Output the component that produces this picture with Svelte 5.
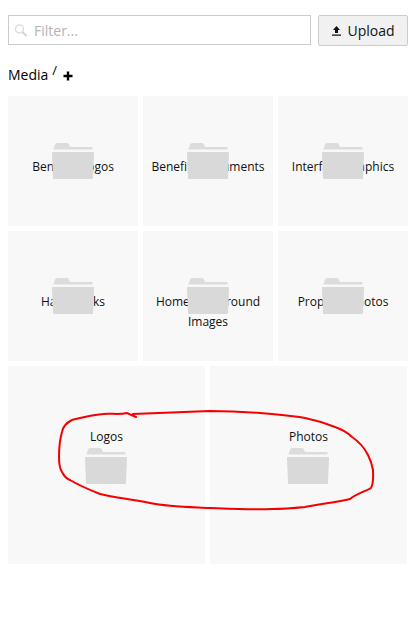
<script>
  const folders = [
    'Benefits Logos',
    'Benefits Documents',
    'Interface Graphics',
    'Handbooks',
    'Home Background Images',
    'Property Photos'
  ];
  const bigFolders = ['Logos', 'Photos'];
</script>

{#snippet folderIcon()}
  <svg class="folder" width="42" height="36" viewBox="0 0 42 36">
    <path d="M2 5 L3 1.5 Q3.5 0 5 0 H15 Q16.5 0 17 1.5 L18 4 H40.5 V6.5 H1.5 V5 Z" fill="#dcdcdc" />
    <path d="M0.5 9 H41.5 Q42 9 42 10 L41 35 Q41 36 40 36 H2 Q1 36 1 35 L0 10 Q0 9 0.5 9 Z" fill="#d9d9d9" />
  </svg>
{/snippet}

<div class="page">
  <div class="toolbar">
    <div class="filter">
      <svg class="search" width="14" height="14" viewBox="0 0 14 14">
        <circle cx="5.5" cy="6" r="4" fill="none" stroke="#dedede" stroke-width="1.5" />
        <path d="M8.5 9 L12.5 13" stroke="#d4d4d4" stroke-width="2" />
      </svg>
      <span class="placeholder">Filter...</span>
    </div>
    <button class="upload">
      <svg width="9" height="10" viewBox="0 0 9 10">
        <path d="M4.5 0 L8 4 H6 V7 H3 V4 H1 Z M0 8.4 H9 V9.8 H0 Z" fill="#111" />
      </svg>
      Upload
    </button>
  </div>

  <div class="crumbs">
    <span>Media</span>
    <span class="slash">/</span>
    <svg class="plus" width="10" height="10" viewBox="0 0 10 10">
      <path d="M5 0.5 V9.5 M0.5 5 H9.5" stroke="#000" stroke-width="2.4" />
    </svg>
  </div>

  <div class="grid">
    {#each folders as name}
      <div class="tile">
        <span class="name">{name}</span>
        {@render folderIcon()}
      </div>
    {/each}
  </div>

  <div class="grid big">
    {#each bigFolders as name}
      <div class="tile large">
        <span class="name">{name}</span>
        {@render folderIcon()}
      </div>
    {/each}
  </div>

  <svg class="scribble" width="412" height="630" viewBox="0 0 412 630">
    <path
      d="M136 417 L127 413 C118 415 110 413 103 414 C90 415 80 418 72 420 C66 423 63 426 62 432 C59 442 59 450 59 457 C59 464 60 469 62 472 C64 476 67 479 70 480 C80 486 90 490 100 494 C115 498 132 499 150 503 C170 507 190 507 210 508 C235 509 255 510 272 509 C285 509 295 508 305 507 C320 504 338 502 350 499 C356 494 366 491 371 488 C374 483 373 475 373 470 C372 464 370 459 368 455 C364 447 358 441 352 437 C347 432 341 429 335 427 C325 423 315 420 305 418 C295 416 283 415 272 414 C250 412 230 411 210 411 C185 412 160 413 133 414"
      fill="none"
      stroke="#f40000"
      stroke-width="2"
      stroke-linecap="round"
    />
  </svg>
</div>

<style>
  :global(body) {
    margin: 0;
    background: #fff;
  }

  .page {
    position: relative;
    width: 400px;
    height: 630px;
    padding: 15px 4px 0 8px;
    font-family: "Open Sans", sans-serif;
    font-size: 12px;
    color: #111;
    overflow: hidden;
  }

  .toolbar {
    display: flex;
    align-items: flex-start;
    gap: 7px;
  }

  .filter {
    flex: none;
    box-sizing: border-box;
    display: flex;
    align-items: center;
    width: 303px;
    height: 30px;
    padding-left: 5px;
    border: 1px solid #ccc;
  }

  .search {
    flex: none;
  }

  .placeholder {
    margin-left: 6px;
    font-size: 14px;
    color: #b3b3b3;
  }

  .upload {
    box-sizing: border-box;
    display: flex;
    align-items: center;
    justify-content: center;
    gap: 6px;
    width: 90px;
    height: 31px;
    padding: 0 0 0 1px;
    border: 1px solid #ccc;
    border-radius: 2px;
    background: #f1f1f1;
    font-family: inherit;
    font-size: 14px;
    color: #111;
  }

  .crumbs {
    display: flex;
    align-items: center;
    height: 20px;
    margin-top: 18px;
    font-size: 14px;
    color: #000;
  }

  .slash {
    margin-left: 4px;
    margin-top: -9px;
    font-size: 13px;
  }

  .plus {
    margin-left: 6px;
    margin-top: 3px;
  }

  .grid {
    display: grid;
    grid-template-columns: repeat(3, 130px);
    grid-auto-rows: 130px;
    gap: 5px;
    margin-top: 12px;
  }

  .grid.big {
    grid-template-columns: repeat(2, 197px);
    grid-auto-rows: 198px;
    margin-top: 5px;
  }

  .tile {
    position: relative;
    box-sizing: border-box;
    padding-top: 61px;
    background: #f8f8f8;
    text-align: center;
    line-height: 20px;
  }

  .tile .folder {
    position: absolute;
    top: 47px;
    left: 44px;
  }

  .tile.large {
    display: flex;
    flex-direction: column;
    align-items: center;
    padding-top: 61px;
  }

  .tile.large .folder {
    position: static;
    margin: 1px 0 0 -2px;
  }

  .scribble {
    position: absolute;
    top: 0;
    left: 0;
    pointer-events: none;
  }
</style>
